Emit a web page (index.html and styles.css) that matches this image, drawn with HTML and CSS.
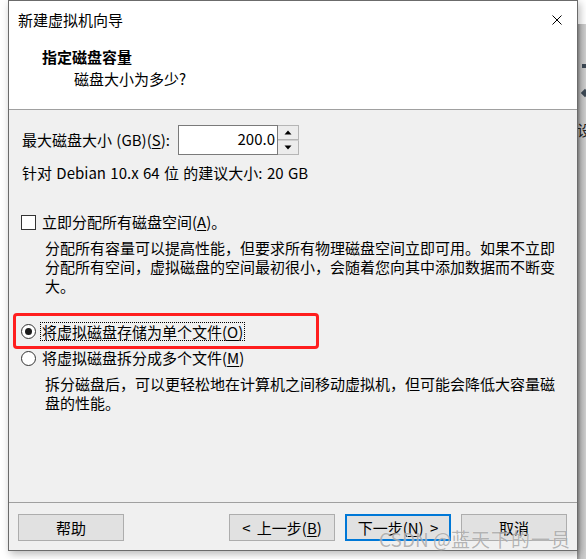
FILE: index.html
```html
<!DOCTYPE html>
<html lang="zh-CN">
<head>
<meta charset="utf-8">
<title>新建虚拟机向导</title>
<link rel="stylesheet" href="styles.css">
</head>
<body>
<div class="bgwin">
  <span class="bg-mark"></span>
  <span class="bg-diamond"></span>
  <span class="bg-char">设</span>
</div>
<div class="dialog">
  <div class="header">
    <div class="titlebar">
      <span class="title">新建虚拟机向导</span>
      <svg class="close" width="10" height="10" viewBox="0 0 10 10"><path d="M0.5 0.5 L9.5 9.5 M9.5 0.5 L0.5 9.5" stroke="#000" stroke-width="1" fill="none"/></svg>
    </div>
    <div class="heading">指定磁盘容量</div>
    <div class="subheading">磁盘大小为多少?</div>
  </div>
  <div class="body">
    <div class="content">
      <div class="size-row">
        <span class="size-label">最大磁盘大小 (GB)(<u>S</u>):</span>
        <div class="spin-input">200.0</div>
        <div class="spin-btns">
          <div class="spin-btn"><svg width="8" height="5" viewBox="0 0 8 5"><path d="M4 0.5 L7.5 4.5 L0.5 4.5 Z" fill="#000"/></svg></div>
          <div class="spin-btn"><svg width="8" height="5" viewBox="0 0 8 5"><path d="M0.5 0.5 L7.5 0.5 L4 4.5 Z" fill="#000"/></svg></div>
        </div>
      </div>
      <div class="recommend">针对 Debian 10.x 64 位 的建议大小: 20 GB</div>
      <div class="check-row">
        <span class="checkbox"></span>
        <span class="opt-label">立即分配所有磁盘空间(<u>A</u>)。</span>
      </div>
      <p class="desc">分配所有容量可以提高性能，但要求所有物理磁盘空间立即可用。如果不立即<br>分配所有空间，虚拟磁盘的空间最初很小，会随着您向其中添加数据而不断变<br>大。</p>
      <div class="radio-row first">
        <span class="radio checked"></span>
        <span class="opt-label focus">将虚拟磁盘存储为单个文件(<u>O</u>)</span>
      </div>
      <div class="radio-row second">
        <span class="radio"></span>
        <span class="opt-label">将虚拟磁盘拆分成多个文件(<u>M</u>)</span>
      </div>
      <p class="desc">拆分磁盘后，可以更轻松地在计算机之间移动虚拟机，但可能会降低大容量磁<br>盘的性能。</p>
    </div>
    <div class="footer">
      <button class="btn">帮助</button>
      <div class="spacer"></div>
      <button class="btn">&lt; 上一步(<u>B</u>)</button>
      <button class="btn default">下一步(<u>N</u>) &gt;</button>
      <button class="btn">取消</button>
    </div>
  </div>
  <div class="annotation"></div>
  <div class="watermark"><span class="wm-latin">CSDN @</span><span class="wm-cjk">蓝天下的一员</span></div>
</div>
</body>
</html>
```
FILE: styles.css
```css
* { box-sizing: border-box; }
html, body {
  margin: 0;
  padding: 0;
  width: 586px;
  height: 559px;
  overflow: hidden;
  background: #ffffff;
  font-family: "Noto Sans CJK SC", "Noto Sans", sans-serif;
  font-size: 15px;
  color: #000;
}
u { text-decoration: underline; text-underline-offset: 2px; }

.bgwin {
  position: absolute;
  left: 577px;
  top: 24px;
  width: 9px;
  height: 535px;
  background: linear-gradient(to right, #8c8c8c, #c4c4c4 4px, #d0d0d0);
  overflow: hidden;
}
.bg-mark {
  position: absolute;
  left: 5px;
  top: 40px;
  width: 4px;
  height: 4px;
  background: #3e4a56;
}
.bg-diamond {
  position: absolute;
  left: 5px;
  top: 66px;
  width: 6px;
  height: 6px;
  background: #3e4a56;
  transform: rotate(45deg);
}
.bg-char {
  position: absolute;
  left: 0;
  top: 96px;
  font-size: 15px;
  line-height: 20px;
  color: #222;
}

.dialog {
  position: relative;
  margin-left: 8px;
  width: 570px;
  height: 551px;
  border: 1px solid #6b6b6b;
  background: #f0f0f0;
  display: flex;
  flex-direction: column;
  box-shadow: 2px 3px 8px rgba(0, 0, 0, 0.28);
}

.header {
  height: 109px;
  background: #ffffff;
  border-bottom: 1px solid #a0a0a0;
  padding: 9px 15px 0 9px;
}
.titlebar {
  display: flex;
  justify-content: space-between;
  align-items: center;
  height: 20px;
}
.title { line-height: 20px; }
.close { display: block; }
.heading {
  margin-top: 17px;
  margin-left: 24px;
  font-weight: bold;
  line-height: 20px;
}
.subheading {
  margin-top: 2px;
  margin-left: 56px;
  line-height: 20px;
}

.body {
  flex: 1;
  display: flex;
  flex-direction: column;
}
.content {
  padding-left: 13px;
}
.size-row {
  margin-top: 15px;
  height: 30px;
  display: flex;
  align-items: center;
}
.size-label {
  width: 156px;
  line-height: 20px;
  white-space: nowrap;
  word-spacing: 1px;
}
.spin-input {
  width: 100px;
  height: 30px;
  background: #fff;
  border: 1px solid #7a7a7a;
  text-align: right;
  padding-right: 2px;
  line-height: 26px;
}
.spin-btns {
  width: 21px;
  height: 30px;
  display: flex;
  flex-direction: column;
}
.spin-btn {
  flex: 1;
  border: 1px solid #b5b5b5;
  border-left: none;
  background: #ececec;
  display: flex;
  align-items: center;
  justify-content: center;
}
.spin-btn + .spin-btn { border-top: 1px solid #d0d0d0; }
.spin-btn svg { display: block; }

.recommend {
  margin-top: 8px;
  line-height: 20px;
  word-spacing: 1px;
}
.check-row {
  margin-top: 29px;
  height: 20px;
  display: flex;
  align-items: center;
  margin-left: -1px;
}
.checkbox {
  width: 15px;
  height: 15px;
  border: 1px solid #333;
  background: #fff;
  margin-right: 6px;
}
.opt-label { line-height: 20px; white-space: nowrap; }

.desc {
  margin: 6px 0 0 23px;
  width: 530px;
  line-height: 19px;
  white-space: nowrap;
}

.radio-row {
  height: 20px;
  display: flex;
  align-items: center;
  margin-left: -1px;
}
.radio-row.first { margin-top: 26px; }
.radio-row.second { margin-top: 7px; }
.radio {
  width: 15px;
  height: 15px;
  border: 1px solid #333;
  border-radius: 50%;
  background: #fff;
  margin-right: 4px;
  display: flex;
  align-items: center;
  justify-content: center;
}
.radio.checked::after {
  content: "";
  width: 7px;
  height: 7px;
  border-radius: 50%;
  background: #1a1a1a;
}
.radio-row .opt-label { padding-left: 2px; }
.opt-label.focus {
  border: 1px dotted #000;
  line-height: 17px;
  padding: 0 1px 0 1px;
}

.footer {
  margin-top: auto;
  border-top: 1px solid #a0a0a0;
  padding: 11px 10px 9px 9px;
  display: flex;
  gap: 10px;
}
.spacer { flex: 1; }
.btn {
  width: 106px;
  height: 27px;
  border: 1px solid #adadad;
  background: #e1e1e1;
  font-family: "Noto Sans CJK SC", "Noto Sans", sans-serif;
  font-size: 15px;
  color: #000;
  padding: 0;
  line-height: 23px;
  word-spacing: 3px;
}
.btn.default {
  border: 2px solid #0078d7;
}

.annotation {
  position: absolute;
  left: 4px;
  top: 312px;
  width: 306px;
  height: 36px;
  border: 3px solid #ff1e1e;
  border-radius: 4px;
}
.watermark {
  position: absolute;
  left: 370px;
  top: 526px;
  font-size: 19px;
  line-height: 24px;
  color: rgba(120, 120, 120, 0.55);
  white-space: nowrap;
  text-shadow: 0 0 1px rgba(255, 255, 255, 0.8);
}
.wm-latin { letter-spacing: 0; }
.wm-cjk { letter-spacing: 1px; }
```
